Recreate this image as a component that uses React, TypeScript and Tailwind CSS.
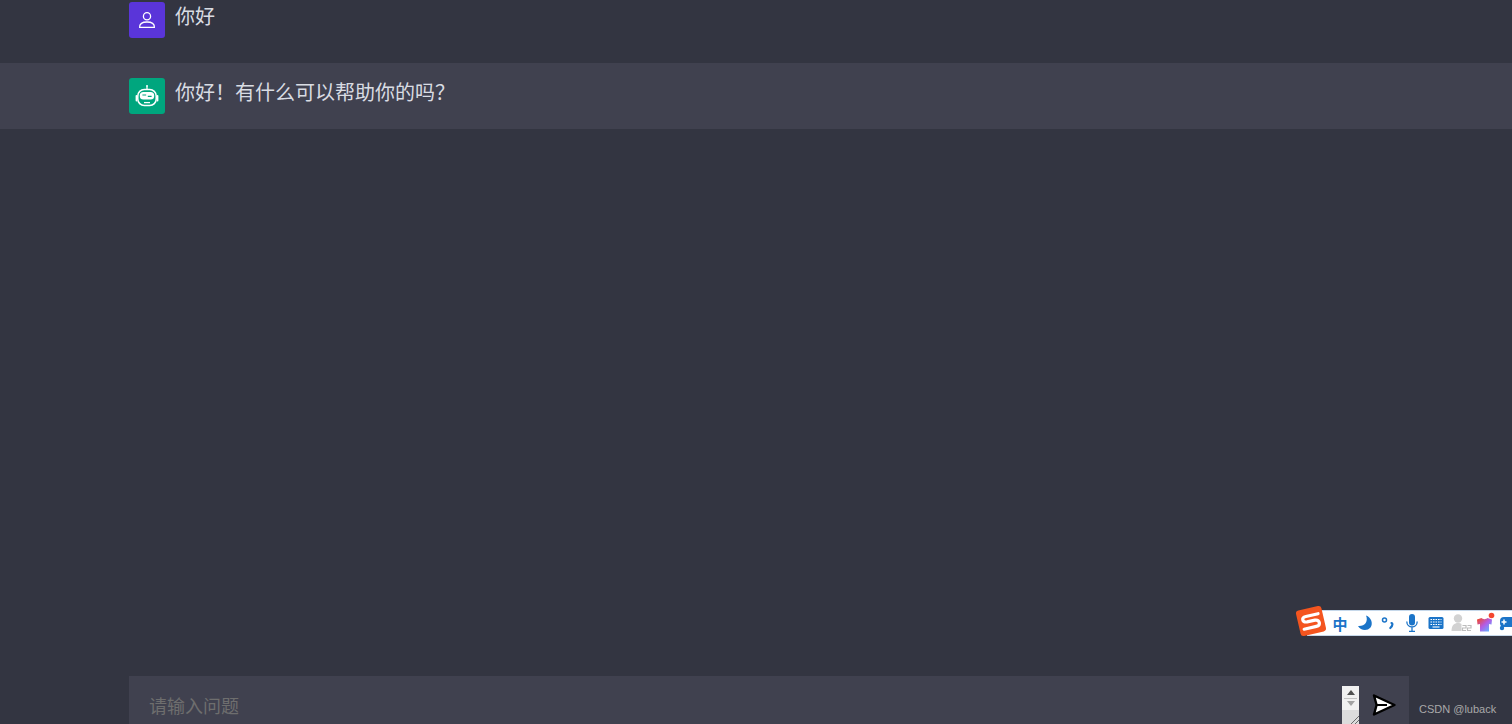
const cjk = "font-['Microsoft_YaHei','Noto_Sans_CJK_SC',sans-serif]";

function UserIcon() {
  return (
    <svg width="18" height="18" viewBox="0 0 18 18" fill="none" stroke="#fff" strokeWidth="1.3">
      <circle cx="9" cy="5.2" r="3.6" />
      <path d="M1.6 16.4h14.8c.3-3.6-2.6-5.4-7.4-5.4s-7.7 1.8-7.4 5.4z" strokeLinejoin="round" />
    </svg>
  );
}

function RobotIcon() {
  return (
    <svg width="24" height="24" viewBox="0 0 24 24" fill="none">
      <circle cx="12" cy="2" r="1" fill="#fff" />
      <path d="M12 2.500v3" stroke="#fff" strokeWidth="1.300" />
      <rect x="2.800" y="5.500" width="18.400" height="16" rx="6.500" stroke="#fff" strokeWidth="1.500" />
      <rect x="0.600" y="11" width="1.800" height="6.500" rx="0.900" fill="#fff" />
      <rect x="21.600" y="11" width="1.800" height="6.500" rx="0.900" fill="#fff" />
      <rect x="4.800" y="8" width="14.400" height="7.600" rx="3.600" fill="#fff" />
      <path d="M7.400 11h3.800M12.800 12.400h3.800" stroke="#00a67e" strokeWidth="1.200" />
      <path d="M9 18.600h6" stroke="#fff" strokeWidth="1.300" />
    </svg>
  );
}

function SendIcon() {
  return (
    <svg width="24" height="24" viewBox="0 0 24 24">
      <path
        d="M2 2.500 22.500 12 2 21.500 4.600 12z"
        fill="#fff"
        stroke="#000"
        strokeWidth="2.400"
        strokeLinejoin="round"
      />
      <path d="M4.600 12H15" stroke="#000" strokeWidth="2" />
    </svg>
  );
}

function ImeBar() {
  return (
    <div className="absolute top-[610px] right-0 flex h-[26px] w-[205px] items-center overflow-hidden border-y border-[#c6d8ea] bg-white pl-[21px]">
      <span className={`w-[24px] shrink-0 text-center text-[15px] leading-none font-bold text-[#1b74c8] ${cjk}`}>中</span>
      <svg className="shrink-0" width="24" height="18" viewBox="0 0 24 18">
        <path d="M14 1.500c2.500 6-1 11-8 10.500 2.500 4.500 9 5.500 12.500 1.500 3-4 .5-10.500-4.500-12z" fill="#1b74c8" />
      </svg>
      <svg className="shrink-0" width="24" height="18" viewBox="0 0 24 18" fill="none">
        <circle cx="8.500" cy="6" r="2" stroke="#1b74c8" strokeWidth="1.500" />
        <path d="M15.500 9c1.200 0 1.500 2.500-1.200 5" stroke="#1b74c8" strokeWidth="2.200" strokeLinecap="round" />
      </svg>
      <svg className="shrink-0" width="24" height="18" viewBox="0 0 24 18" fill="none">
        <rect x="9" y="0" width="6" height="11.500" rx="3" fill="#1b74c8" />
        <path d="M6.800 7.500c0 7.200 10.400 7.200 10.400 0M12 13v4M9 17.500h6" stroke="#1b74c8" strokeWidth="1.300" />
      </svg>
      <svg className="shrink-0" width="24" height="14" viewBox="0 0 24 14">
        <rect x="4.500" y="1" width="15" height="12" rx="1.500" fill="#1b74c8" />
        <path
          d="M6.500 3.500h11M6.500 6h11M6.500 8.500h11"
          stroke="#fff"
          strokeWidth="1.100"
          strokeDasharray="1.600 0.900"
        />
        <path d="M8.500 11h7" stroke="#fff" strokeWidth="1.100" />
      </svg>
      <svg className="shrink-0" width="25" height="18" viewBox="0 0 25 18" fill="none">
        <circle cx="10" cy="4.500" r="4.200" fill="#d2d2d2" />
        <path d="M3.500 17c0-6 3-8 6.500-8 1.500 0 2.500.3 3.500 1v7z" fill="#d2d2d2" />
        <path d="M14.500 11.500h3.500V14h-3.500v2.500H18M19.500 11.500H23V14h-3.500v2.500H23" stroke="#bdbdbd" strokeWidth="1.200" />
      </svg>
      <svg className="shrink-0" width="24" height="24" viewBox="0 0 24 24" fill="none">
        <defs>
          <linearGradient id="shirt" x1="0" y1="0" x2="1" y2="1">
            <stop offset="0.1" stopColor="#ea4a3c" />
            <stop offset="0.5" stopColor="#b45ce6" />
            <stop offset="0.9" stopColor="#5fb4ff" />
          </linearGradient>
        </defs>
        <path d="M4 8.500l4.500-1.500c1.300 1.500 4.500 1.500 6 0l4.500 1.500-.5 5-2.500-.5v7.500h-9V13l-2.500.5z" fill="url(#shirt)" />
        <circle cx="18.500" cy="4.500" r="2.800" fill="#f4472f" />
      </svg>
      <svg className="shrink-0" width="24" height="18" viewBox="0 0 24 18" fill="none">
        <rect x="3" y="3" width="21" height="10" rx="4" fill="#1b74c8" />
        <circle cx="5" cy="14" r="2.200" fill="#1b74c8" />
        <path d="M7 5.500v5M4.500 8h5" stroke="#fff" strokeWidth="1.500" />
      </svg>
    </div>
  );
}

function SogouLogo() {
  return (
    <div className="absolute top-[608px] left-[1298px] flex h-[26px] w-[26px] rotate-[-13deg] items-center justify-center rounded-[3px] bg-[#f4551f]">
      <svg width="22" height="17" viewBox="0 0 22 17" fill="none">
        <path
          d="M19.500 2.500H7C2 2.500 2 7.500 7 8h8c5 .5 5 6.500 0 6.500H2.500"
          stroke="#fff"
          strokeWidth="3.200"
          strokeLinecap="round"
        />
      </svg>
    </div>
  );
}

function Message({ text, avatar, alt }: { text: string; avatar: React.ReactNode; alt?: boolean }) {
  return (
    <div className={alt ? "flex h-[66px] gap-[10px] bg-[#40414f] pt-[15px] pl-[129px]" : "flex h-[63px] gap-[10px] pt-[2px] pl-[129px]"}>
      {avatar}
      <p className={`text-[20px] leading-[28px] text-[#d9dce3] ${cjk}`}>{text}</p>
    </div>
  );
}

export default function App() {
  return (
    <div className="relative flex h-[724px] w-full flex-col overflow-hidden bg-[#333541]">
      <div className="flex-1">
        <Message
          text="你好"
          avatar={
            <div className="flex h-[36px] w-[36px] items-center justify-center rounded-[3px] bg-[#5a35d9]">
              <UserIcon />
            </div>
          }
        />
        <Message
          alt
          text="你好！有什么可以帮助你的吗？"
          avatar={
            <div className="flex h-[36px] w-[36px] items-center justify-center rounded-[3px] bg-[#00a67e]">
              <RobotIcon />
            </div>
          }
        />
      </div>

      <div className="flex h-[48px] pl-[129px]">
        <div className="flex w-[1280px] bg-[#40414f] pt-[10px] pr-[13px] pl-[20px]">
          <textarea
            readOnly
            placeholder="请输入问题"
            className={`h-[38px] flex-1 resize-none overflow-hidden bg-transparent pt-[5px] text-[18px] leading-[28px] text-[#d1d5db] outline-none placeholder:text-[#6e6e6e] ${cjk}`}
          />
          <div className="relative flex h-[38px] w-[17px] flex-col items-center overflow-hidden bg-[#f1f1f1] pt-[4px]">
            <div className="h-0 w-0 border-x-[4px] border-b-[5px] border-x-transparent border-b-[#505050]" />
            <div className="mt-[3px] h-[1px] w-[13px] bg-[#c4c4c4]" />
            <div className="mt-[3px] h-0 w-0 border-x-[4px] border-t-[5px] border-x-transparent border-t-[#a3a3a3]" />
            <div className="mt-[4px] h-full w-full bg-[#dcdcdc]" />
            <svg className="absolute right-0 bottom-0" width="9" height="9" viewBox="0 0 9 9" fill="none">
              <path d="M1 9 9 1M5 9 9 5" stroke="#6b6b6b" strokeWidth="1" />
            </svg>
          </div>
          <div className="mt-[-3px] ml-[13px] h-[24px] pt-[10px]">
            <SendIcon />
          </div>
        </div>
      </div>

      <ImeBar />
      <SogouLogo />
      <span className="absolute top-[702px] left-[1419px] font-['Liberation_Sans',sans-serif] text-[11px] leading-[14px] text-[#a9a9a9]">
        CSDN @luback
      </span>
    </div>
  );
}
